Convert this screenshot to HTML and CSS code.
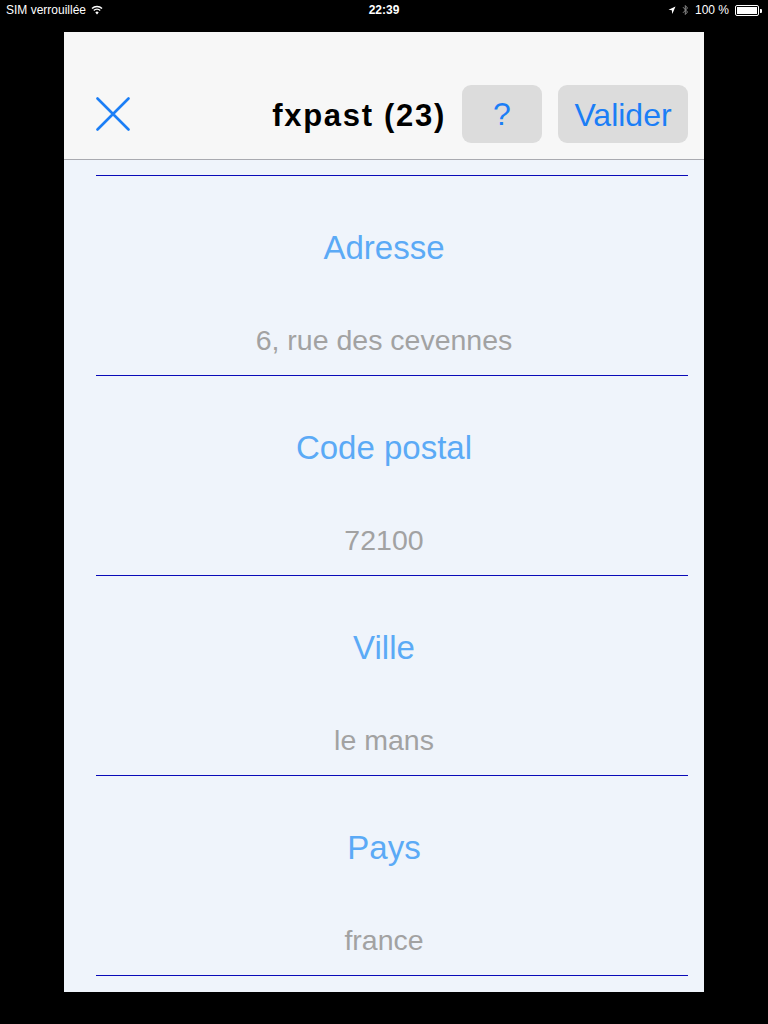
FILE: index.html
```html
<!DOCTYPE html>
<html lang="fr">
<head>
<meta charset="utf-8">
<title>fxpast</title>
<link rel="stylesheet" href="styles.css">
</head>
<body>
<div class="statusbar">
  <div class="sb-left">
    <span>SIM verrouillée</span>
    <svg class="wifi" width="12" height="10" viewBox="0 0 12 10">
      <path d="M1 3.6 A7 7 0 0 1 11 3.6" fill="none" stroke="#fff" stroke-width="1.4"/>
      <path d="M2.8 5.5 A4.5 4.5 0 0 1 9.2 5.5" fill="none" stroke="#fff" stroke-width="1.4"/>
      <path d="M6 9.5 L4.3 7.4 A2.4 2.4 0 0 1 7.7 7.4 Z" fill="#fff"/>
    </svg>
  </div>
  <div class="sb-time">22:39</div>
  <div class="sb-right">
    <svg width="8" height="9" viewBox="0 0 8 9"><path d="M7.5 0.5 L0.5 3.8 L3.8 4.3 L4.3 8 Z" fill="#fff"/></svg>
    <svg width="7" height="12" viewBox="0 0 7 12"><path d="M1 3.2 L5.5 8 L3.3 10.5 V1.5 L5.5 4 L1 8.8" fill="none" stroke="#888" stroke-width="1"/></svg>
    <span>100 %</span>
    <span class="battery"><span class="battery-fill"></span></span>
  </div>
</div>

<div class="modal">
  <header class="nav">
    <svg class="close" width="34" height="34" viewBox="0 0 34 34">
      <path d="M1.5 1.5 L32.5 32.5 M32.5 1.5 L1.5 32.5" stroke="#1b7ef6" stroke-width="2.6" stroke-linecap="round"/>
    </svg>
    <h1 class="title">fxpast (23)</h1>
    <button class="btn btn-help">?</button>
    <button class="btn btn-ok">Valider</button>
  </header>

  <div class="content">
    <ul class="fields">
      <li class="field">
        <div class="label">Adresse</div>
        <div class="value">6, rue des cevennes</div>
      </li>
      <li class="field">
        <div class="label">Code postal</div>
        <div class="value">72100</div>
      </li>
      <li class="field">
        <div class="label">Ville</div>
        <div class="value">le mans</div>
      </li>
      <li class="field">
        <div class="label">Pays</div>
        <div class="value">france</div>
      </li>
    </ul>
  </div>
</div>
</body>
</html>
```

FILE: styles.css
```css
* { box-sizing: border-box; }

html, body {
  margin: 0;
  padding: 0;
  background: #000;
  width: 768px;
  height: 1024px;
  overflow: hidden;
  font-family: "Liberation Sans", Arial, sans-serif;
}

.statusbar {
  height: 20px;
  display: flex;
  align-items: center;
  justify-content: space-between;
  padding: 0 9px 0 6px;
  color: #fff;
  font-size: 12px;
  position: relative;
}

.sb-left, .sb-right {
  display: flex;
  align-items: center;
  gap: 5px;
}

.sb-time {
  position: absolute;
  left: 0;
  right: 0;
  text-align: center;
  font-weight: bold;
  font-size: 12px;
  pointer-events: none;
}

.sb-right { gap: 6px; }

.battery {
  position: relative;
  width: 24px;
  height: 11px;
  border: 1px solid #fff;
  border-radius: 2px;
  padding: 1px;
  display: inline-block;
}
.battery::after {
  content: "";
  position: absolute;
  right: -4px;
  top: 3px;
  width: 2px;
  height: 4px;
  background: #fff;
  border-radius: 0 1px 1px 0;
}
.battery-fill {
  display: block;
  width: 100%;
  height: 100%;
  background: #fff;
}

.modal {
  margin: 12px 0 0 64px;
  width: 640px;
  height: 960px;
  background: #eff4fb;
  overflow: hidden;
}

.nav {
  height: 128px;
  background: #f7f7f7;
  border-bottom: 1px solid #a9aab0;
  display: flex;
  align-items: center;
  padding: 53px 16px 16px 32px;
  gap: 16px;
}

.close { flex: none; }

.title {
  flex: 1;
  margin: 0;
  text-align: right;
  font-size: 31px;
  font-weight: bold;
  color: #000;
  letter-spacing: 1.7px;
  padding-top: 4px;
}

.btn {
  height: 58px;
  border: none;
  border-radius: 9px;
  background: #dcdcdc;
  color: #1b7ef6;
  font-family: "Liberation Sans", Arial, sans-serif;
  font-size: 32px;
  padding: 0;
}
.btn-help { width: 80px; }
.btn-ok { width: 130px; padding-top: 2px; }

.content {
  padding: 15px 16px 0 32px;
}

.fields {
  list-style: none;
  margin: 0;
  padding: 0;
  border-top: 1px solid #0a0ab8;
}

.field {
  height: 200px;
  border-bottom: 1px solid #0a0ab8;
  text-align: center;
  padding: 52px 16px 0 0;
}

.label {
  font-size: 33px;
  line-height: 40px;
  color: #5baaf6;
}

.value {
  margin-top: 54px;
  font-size: 28.5px;
  line-height: 36px;
  color: #a2a2a2;
}
```
